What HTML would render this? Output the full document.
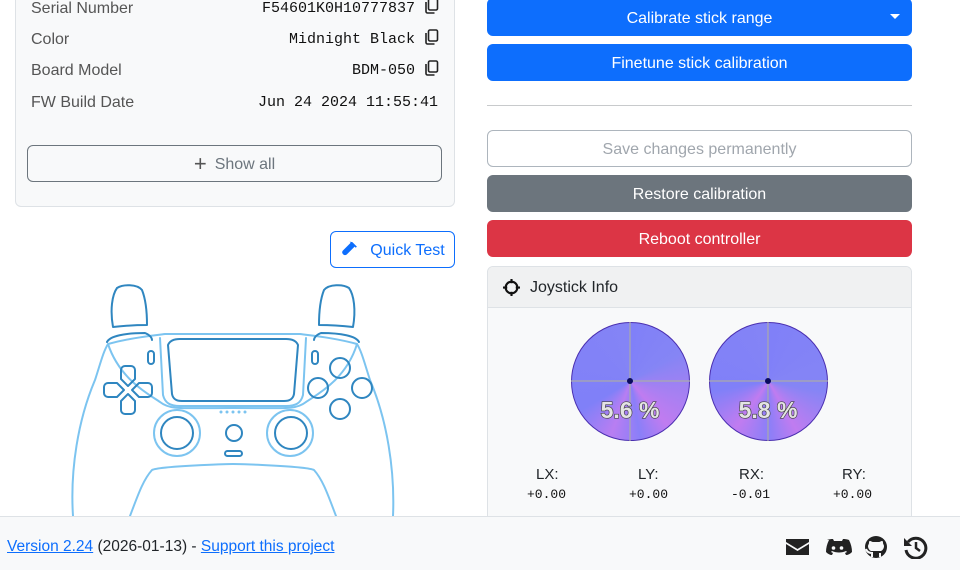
<!DOCTYPE html>
<html><head><meta charset="utf-8"><style>
*{box-sizing:border-box;margin:0;padding:0}
body{width:960px;height:570px;overflow:hidden;background:#fff;font-family:"Liberation Sans",sans-serif;color:#212529;position:relative}
.abs{position:absolute}
.card{left:15px;top:-10px;width:440px;height:217px;background:#f8f9fa;border:1px solid #dee2e6;border-radius:6px}
.lbl{left:31px;font-size:16px;color:#555}
.val{font-family:"Liberation Mono",monospace;font-size:15px;color:#111;text-align:right}
.btn{border-radius:6px;font-size:16px;display:flex;align-items:center;justify-content:center;padding-top:3px}
</style></head><body>
<div class="abs card"></div>
<div class="abs lbl" style="top:0px">Serial Number</div>
<div class="abs lbl" style="top:31px">Color</div>
<div class="abs lbl" style="top:62px">Board Model</div>
<div class="abs lbl" style="top:94px">FW Build Date</div>
<div class="abs val" style="right:545px;top:0px">F54601K0H10777837</div>
<div class="abs val" style="right:545px;top:31px">Midnight Black</div>
<div class="abs val" style="right:545px;top:62px">BDM-050</div>
<div class="abs val" style="right:522px;top:94px">Jun 24 2024 11:55:41</div>
<svg class="abs" style="left:424px;top:-2px" width="16" height="84" viewBox="0 0 16 84" fill="none" stroke="#222" stroke-width="1.6">
<g><rect x="4.5" y="1" width="9" height="11" rx="1.5"/><path d="M2 4v9.5c0 .8.7 1.5 1.5 1.5h7"/></g>
<g transform="translate(0,31)"><rect x="4.5" y="1" width="9" height="11" rx="1.5"/><path d="M2 4v9.5c0 .8.7 1.5 1.5 1.5h7"/></g>
<g transform="translate(0,62)"><rect x="4.5" y="1" width="9" height="11" rx="1.5"/><path d="M2 4v9.5c0 .8.7 1.5 1.5 1.5h7"/></g>
</svg>
<div class="abs btn" style="left:27px;top:145px;width:415px;height:37px;border:1px solid #6c757d;color:#6c757d"><span style="font-size:22px;margin-right:8px;color:#555;margin-top:-3px">+</span>Show all</div>
<div class="abs btn" style="left:330px;top:231px;width:125px;height:37px;border:1px solid #0d6efd;color:#0d6efd">
<svg width="18" height="18" viewBox="0 0 16 16" style="margin-right:12px;margin-top:-3px"><path d="M11 1l4 4-1 1-1-1-7 7a2.5 2.5 0 01-3.5-3.5l7-7-1-1z" fill="#0d6efd"/></svg>Quick Test</div>

<svg class="abs" style="left:0;top:0" width="480" height="520" fill="none" stroke-linecap="round" stroke-linejoin="round">
<g stroke="#7cc4f0" stroke-width="2">
<path d="M73 516 C70 470 78 420 95 380 C100 365 103 352 108 344 C130 338 150 336 165 334 L300 334 C315 336 335 338 357 344 C362 352 365 365 370 380 C387 420 395 470 393 516"/>
<path d="M130 516 C138 495 143 480 152 470 C160 466 230 464 233 464 C236 464 306 466 314 470 C323 480 328 495 336 516"/>
<path d="M108 344 C120 380 150 395 160 402 C170 410 180 408 233 408 C286 408 296 410 306 402 C316 395 346 380 357 344"/>
<path d="M160 338 L163 395 C165 403 170 406 180 406 L286 406 C296 406 301 403 303 395 L306 338"/>
<circle cx="177" cy="433" r="23"/><circle cx="290" cy="433" r="23"/>
</g>
<g stroke="#2f86c0" stroke-width="2">
<path d="M113 327 C110 310 112 295 117 288 C123 284 137 284 142 290 C146 300 147 315 147 325 C135 325 122 326 113 327Z"/>
<path d="M353 327 C356 310 354 295 349 288 C343 284 329 284 324 290 C320 300 319 315 319 325 C331 325 344 326 353 327Z"/>
<path d="M107 342 C110 336 125 333 145 333 C150 335 152 338 152 340"/>
<path d="M359 342 C356 336 341 333 321 333 C316 335 314 338 314 340"/>
<path d="M168 345 C170 340 175 339 180 339 L286 339 C291 339 296 340 298 345 L294 394 C293 399 290 401 284 401 L182 401 C176 401 173 399 172 394Z"/>
<rect x="148" y="351" width="6" height="13" rx="3"/><rect x="312" y="351" width="6" height="13" rx="3"/>
<path d="M128 386 l-7-7 v-9 a4 4 0 014-4 h6 a4 4 0 014 4 v9z"/>
<path d="M128 394 l-7 7 v9 a4 4 0 004 4 h6 a4 4 0 004-4 v-9z"/>
<path d="M124 390 l-7-7 h-9 a4 4 0 00-4 4 v6 a4 4 0 004 4 h9z"/>
<path d="M132 390 l7-7 h9 a4 4 0 014 4 v6 a4 4 0 01-4 4 h-9z"/>
<circle cx="340" cy="368" r="10"/><circle cx="318" cy="388" r="10"/><circle cx="362" cy="388" r="10"/><circle cx="340" cy="409" r="10"/>
<circle cx="177" cy="433" r="16"/><circle cx="291" cy="433" r="16"/>
<circle cx="234" cy="433" r="8"/><rect x="225" y="451" width="17" height="5" rx="2.5"/>
</g>
<g fill="#7cc4f0"><circle cx="221" cy="412" r="1.5"/><circle cx="227" cy="412" r="1.5"/><circle cx="233" cy="412" r="1.5"/><circle cx="239" cy="412" r="1.5"/><circle cx="245" cy="412" r="1.5"/></g>
</svg>

<div class="abs btn" style="left:487px;top:-2px;width:425px;height:38px;background:#0d6efd;color:#fff">Calibrate stick range<span style="position:absolute;right:12px;top:16px;border:5px solid transparent;border-top-color:#fff;border-bottom:0"></span></div>
<div class="abs btn" style="left:487px;top:44px;width:425px;height:37px;background:#0d6efd;color:#fff">Finetune stick calibration</div>
<div class="abs" style="left:487px;top:105px;width:425px;height:1px;background:#c8cacc"></div>
<div class="abs btn" style="left:487px;top:130px;width:425px;height:37px;border:1px solid #adb5bd;color:#a0a6ad">Save changes permanently</div>
<div class="abs btn" style="left:487px;top:175px;width:425px;height:37px;background:#6c757d;color:#fff">Restore calibration</div>
<div class="abs btn" style="left:487px;top:220px;width:425px;height:37px;background:#dc3545;color:#fff">Reboot controller</div>
<div class="abs" style="left:487px;top:266px;width:425px;height:290px;background:#f8f9fa;border:1px solid #dee2e6;border-radius:6px;overflow:hidden">
<div style="height:41px;background:#f0f1f2;border-bottom:1px solid #dee2e6;display:flex;align-items:center;padding-left:15px;padding-top:2px;font-size:16px">
<svg width="17" height="17" viewBox="0 0 16 16" style="margin-right:10px;margin-top:-2px" fill="none" stroke="#111" stroke-width="2"><circle cx="8" cy="8" r="5.5"/><path d="M8 0v4M8 12v4M0 8h4M12 8h4"/></svg>Joystick Info</div>
</div>
<div class="abs" style="left:571px;top:322px;width:119px;height:119px;border-radius:50%;border:1.5px solid #4a2fb0;background:conic-gradient(#8080f8 0deg,#8585f5 60deg,#c07cf0 140deg,#8a7ff8 170deg,#b87ef2 200deg,#8080f8 240deg,#8484f6 360deg)"></div>
<div class="abs" style="left:709px;top:322px;width:119px;height:119px;border-radius:50%;border:1.5px solid #4a2fb0;background:conic-gradient(#8080f8 0deg,#8585f5 100deg,#c07cf0 150deg,#8a7ff8 180deg,#c07cf0 215deg,#8080f8 260deg,#8484f6 360deg)"></div>
<svg class="abs" style="left:560px;top:315px" width="280" height="135">
<g stroke="#aaa" stroke-width="1.2"><path d="M11 66h119M70 7v119M149 66h119M208 7v119"/></g>
<circle cx="70" cy="66" r="3" fill="#0a0a60"/><circle cx="208" cy="66" r="3" fill="#0a0a60"/>
<g font-family="Liberation Sans,sans-serif" font-size="23" fill="#e4e4e4" stroke="#444" stroke-width="1.3" paint-order="stroke" text-anchor="middle" font-weight="bold"><text x="70" y="103">5.6 %</text><text x="208" y="103">5.8 %</text></g>
</svg>
<div class="abs" style="left:487px;top:466px;width:425px;font-size:15px">
<span class="abs" style="left:49px">LX:</span><span class="abs" style="left:151px">LY:</span><span class="abs" style="left:252px">RX:</span><span class="abs" style="left:355px">RY:</span></div>
<div class="abs val" style="left:527px;top:487px;font-size:13px;text-align:left">+0.00</div>
<div class="abs val" style="left:629px;top:487px;font-size:13px;text-align:left">+0.00</div>
<div class="abs val" style="left:731px;top:487px;font-size:13px;text-align:left">-0.01</div>
<div class="abs val" style="left:833px;top:487px;font-size:13px;text-align:left">+0.00</div>

<div class="abs" style="left:0;top:516px;width:960px;height:54px;background:#f8f9fa;border-top:1px solid #dee2e6"></div>
<div class="abs" style="left:7px;top:538px;font-size:15.5px"><a style="color:#0d6efd;text-decoration:underline">Version 2.24</a> (2026-01-13) - <a style="color:#0d6efd;text-decoration:underline">Support this project</a></div>
<svg class="abs" style="left:785px;top:535px" width="145" height="24" fill="#222">
<path d="M1 4h23v3l-11.5 7L1 7z M1 9l11.5 7L24 9v11H1z"/>
<path d="M42 5c3-1 5-1 6-1l1 2h8l1-2c1 0 3 0 6 1 2 4 3 8 3 12-2 2-4 3-6 3l-1-2 2-1-1-1c-4 2-10 2-14 0l-1 1 2 1-1 2c-2 0-4-1-6-3 0-4 1-8 3-12z"/>
<circle cx="48.5" cy="13" r="1.8" fill="#f8f9fa"/><circle cx="56.5" cy="13" r="1.8" fill="#f8f9fa"/>
<circle cx="91" cy="12" r="11"/><path d="M87 22v-4c-3 0-5-1-6-4M95 22v-4" stroke="#f8f9fa" stroke-width="2"/>
<path d="M86 16c-2-1-3-3-3-5 0-1 1-2 1-3 0-1 0-2 1-2 1 0 2 1 3 1h6c1 0 2-1 3-1 1 0 1 1 1 2 0 1 1 2 1 3 0 2-1 4-3 5z" fill="#f8f9fa"/>
<path d="M123 7a10 10 0 1 1-2 8" fill="none" stroke="#222" stroke-width="3"/><path d="M119 3v8h8z"/><path d="M131 7v6l4 3" fill="none" stroke="#222" stroke-width="2.5"/>
</svg>
</body></html>
